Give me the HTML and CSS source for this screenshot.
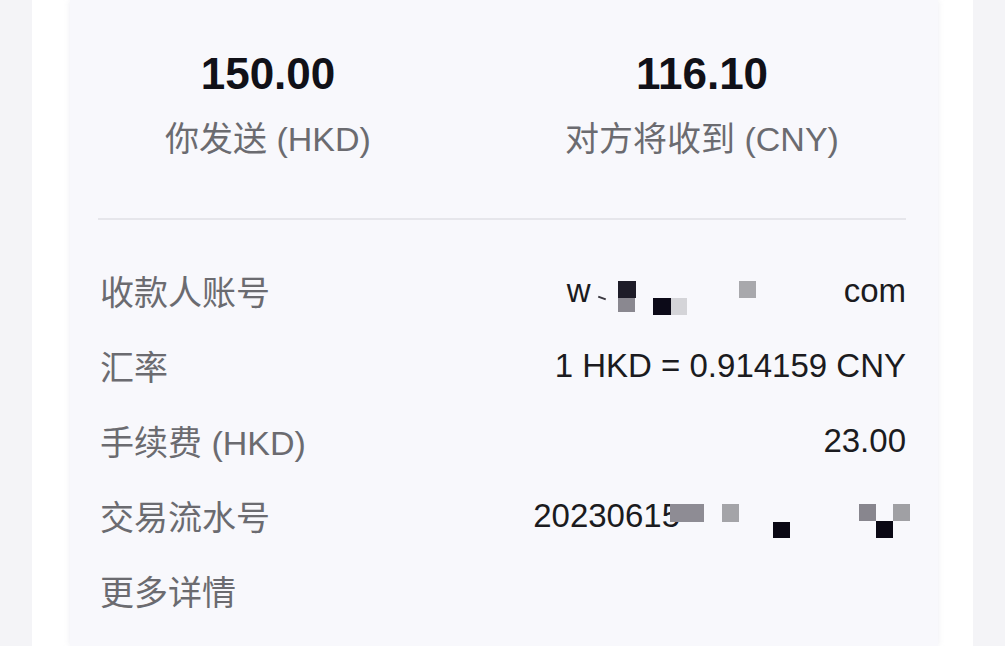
FILE: index.html
```html
<!DOCTYPE html>
<html lang="zh-CN">
<head>
<meta charset="utf-8">
<title>转账详情</title>
<link rel="stylesheet" href="styles.css">
</head>
<body>
<div class="panel">
  <div class="card">
    <div class="summary">
      <div class="col">
        <div class="amount">150.00</div>
        <div class="caption">你发送 (HKD)</div>
      </div>
      <div class="col">
        <div class="amount">116.10</div>
        <div class="caption">对方将收到 (CNY)</div>
      </div>
    </div>
    <div class="divider"></div>
    <div class="rows">
      <div class="row">
        <span class="label">收款人账号</span>
        <span class="value">w<span class="gap gap-acct"></span>com</span>
        <span class="mz tick"></span>
        <span class="mz a1"></span>
        <span class="mz a2"></span>
        <span class="mz a3"></span>
        <span class="mz a4"></span>
        <span class="mz a5"></span>
      </div>
      <div class="row">
        <span class="label">汇率</span>
        <span class="value">1 HKD = 0.914159 CNY</span>
      </div>
      <div class="row">
        <span class="label">手续费 (HKD)</span>
        <span class="value">23.00</span>
      </div>
      <div class="row">
        <span class="label">交易流水号</span>
        <span class="value">20230615<span class="gap gap-txn"></span></span>
        <span class="mz b1"></span>
        <span class="mz b2"></span>
        <span class="mz b3"></span>
        <span class="mz b4"></span>
        <span class="mz b5"></span>
        <span class="mz b6"></span>
      </div>
      <div class="row">
        <span class="label">更多详情</span>
      </div>
    </div>
  </div>
</div>
</body>
</html>
```
FILE: styles.css
```css
html, body {
  margin: 0;
  padding: 0;
  height: 100%;
  overflow: hidden;
}
body {
  background: #f4f4f7;
  font-family: "Liberation Sans", "Noto Sans CJK SC", sans-serif;
}
.panel {
  margin-left: 32px;
  width: 941px;
  height: 100%;
  background: #ffffff;
  padding: 0 35px 0 38px;
  box-sizing: border-box;
}
.card {
  width: 868px;
  height: 100%;
  background: #f8f8fc;
  box-shadow: 0 0 6px rgba(200, 200, 215, 0.35);
}
.summary {
  display: grid;
  grid-template-columns: 396px 1fr;
  padding-top: 48px;
}
.col {
  text-align: center;
}
.amount {
  font-size: 44px;
  line-height: 52px;
  font-weight: 700;
  color: #111118;
}
.caption {
  margin-top: 17px;
  font-size: 34px;
  line-height: 44px;
  color: #6b6b70;
}
.divider {
  margin: 57px 32px 0 28px;
  height: 2px;
  background: #e6e6eb;
}
.rows {
  padding: 33px 32px 0 30px;
}
.row {
  position: relative;
  display: flex;
  justify-content: space-between;
  align-items: center;
  height: 75px;
  font-size: 33px;
}
.label {
  color: #6b6b70;
  font-size: 34px;
}
.value {
  color: #1b1b20;
  white-space: nowrap;
}
.gap {
  display: inline-block;
}
.gap-acct { width: 253px; }
.gap-txn { width: 226px; }

.mz {
  position: absolute;
}
.tick { left: 498px; top: 44px; width: 8px; height: 2px; background: #3a3840; transform: rotate(20deg); }
.a1 { left: 518px; top: 28px; width: 18px; height: 17px; background: #1e1c28; }
.a2 { left: 518px; top: 45px; width: 17px; height: 14px; background: #8a8890; }
.a3 { left: 553px; top: 45px; width: 18px; height: 17px; background: #0c0a18; }
.a4 { left: 571px; top: 45px; width: 16px; height: 17px; background: #d4d4d8; }
.a5 { left: 639px; top: 28px; width: 17px; height: 17px; background: #a8a8ac; }

.b1 { left: 570px; top: 26px; width: 34px; height: 18px; background: #8e8c94; }
.b2 { left: 622px; top: 26px; width: 17px; height: 18px; background: #a4a4a8; }
.b3 { left: 673px; top: 44px; width: 17px; height: 16px; background: #0a0814; }
.b4 { left: 759px; top: 26px; width: 17px; height: 17px; background: #88868e; }
.b5 { left: 776px; top: 43px; width: 17px; height: 17px; background: #0a0814; }
.b6 { left: 793px; top: 26px; width: 17px; height: 17px; background: #a0a0a4; }
```
